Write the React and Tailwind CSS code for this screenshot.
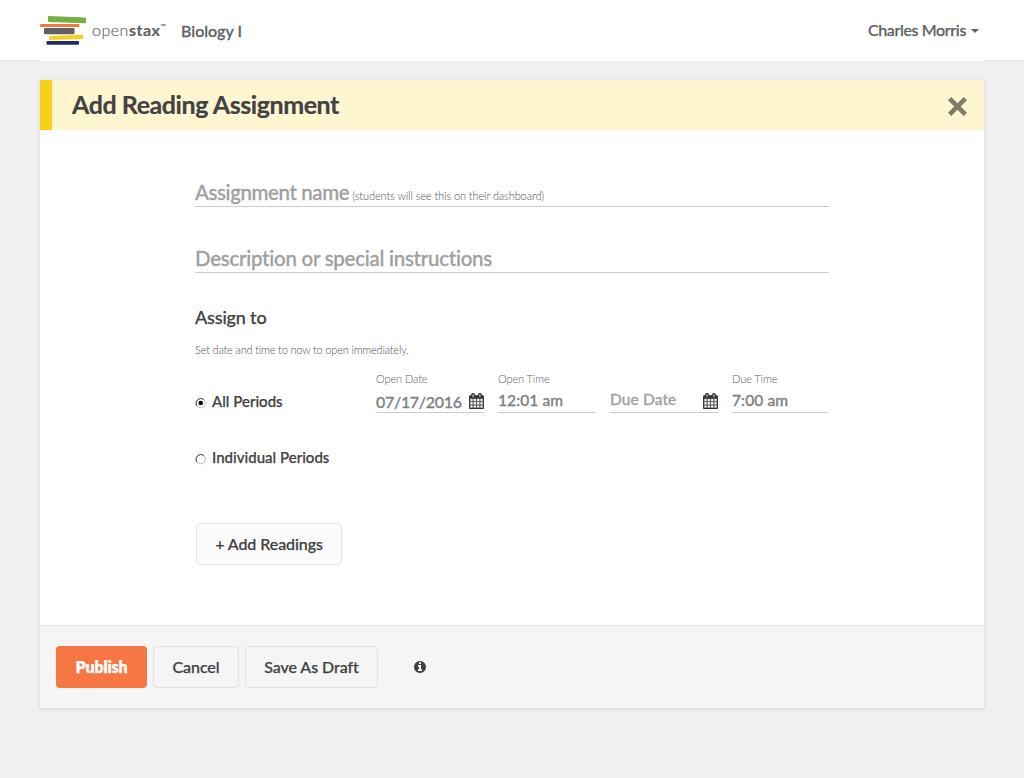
import React from "react";

const CALENDAR =
  "M192 1664h288v-288h-288v288zm352 0h320v-288h-320v288zm-352-352h288v-320h-288v320zm352 0h320v-320h-320v320zm-352-384h288v-288h-288v288zm736 736h320v-288h-320v288zm-384-736h320v-288h-320v288zm768 736h288v-288h-288v288zm-384-352h320v-320h-320v320zm-352-864v-288q0-13-9.5-22.5t-22.5-9.5h-64q-13 0-22.5 9.5t-9.5 22.5v288q0 13 9.5 22.5t22.5 9.5h64q13 0 22.5-9.5t9.5-22.5zm736 864h288v-320h-288v320zm-384-384h320v-288h-320v288zm384 0h288v-288h-288v288zm32-480v-288q0-13-9.5-22.5t-22.5-9.5h-64q-13 0-22.5 9.5t-9.5 22.5v288q0 13 9.5 22.5t22.5 9.5h64q13 0 22.5-9.5t9.5-22.5zm384-64v1280q0 52-38 90t-90 38h-1408q-52 0-90-38t-38-90v-1280q0-52 38-90t90-38h128v-96q0-66 47-113t113-47h64q66 0 113 47t47 113v96h384v-96q0-66 47-113t113-47h64q66 0 113 47t47 113v96h128q52 0 90 38t38 90z";
const INFO =
  "M1152 1376v-160q0-14-9-23t-23-9h-96v-512q0-14-9-23t-23-9h-320q-14 0-23 9t-9 23v160q0 14 9 23t23 9h96v320h-96q-14 0-23 9t-9 23v160q0 14 9 23t23 9h448q14 0 23-9t9-23zm-128-896v-160q0-14-9-23t-23-9h-192q-14 0-23 9t-9 23v160q0 14 9 23t23 9h192q14 0 23-9t9-23zm640 416q0 209-103 385.5t-279.5 279.5-385.5 103-385.5-103-279.5-279.5-103-385.5 103-385.5 279.5-279.5 385.5-103 385.5 103 279.5 279.5 103 385.5z";

function Logo() {
  return (
    <svg viewBox="0 0 46 30" className="h-[30px] w-[46px] shrink-0">
      <path d="M9 1 45 2.4Q46 2.5 46 3.5V7Q46 8.300 45 8.200L9 7Q8 7 8 6V2Q8 1 9 1Z" fill="#77af42" />
      <rect x="0" y="9" width="39.500" height="3" rx="1" fill="#f47641" />
      <rect x="4" y="13" width="30.500" height="6.300" rx="1.300" fill="#5e6062" />
      <path d="M10 21 42 19.800Q43 19.800 43 20.800V23Q43 24 42 24L10 25Q9 25 9 24V22Q9 21 10 21Z" fill="#f4d019" />
      <rect x="6.500" y="26" width="32.500" height="3.800" rx="1" fill="#232c66" />
    </svg>
  );
}

function Field({ label, value, icon, muted, className }) {
  return (
    <div className={`flex h-[42px] flex-col justify-between border-b border-[#cccccc] ${className}`}>
      <span className="h-4 whitespace-nowrap text-[11px] font-light leading-4 tracking-[-0.1px] text-[#606060]">{label}</span>
      <div className="flex h-[24px] items-start justify-between [-webkit-text-stroke:0.3px]">
        <span className={muted ? "text-[15.500px] font-medium leading-[22px] tracking-[0.12px] text-[#a0a0a0]" : icon ? "pt-[2px] text-[16px] font-medium leading-[23px] tracking-[-0.32px] text-[#818181]" : "text-[15.500px] font-medium leading-[24px] tracking-[0.12px] text-[#818181]"}>
          {value}
        </span>
        {icon && (
          <svg viewBox="64 0 1664 1792" className="mt-[5px] h-4 w-[15px] shrink-0" fill="#333333" stroke="#333333" strokeWidth="30">
            <path d={CALENDAR} />
          </svg>
        )}
      </div>
    </div>
  );
}

function Radio({ checked }) {
  return (
    <svg viewBox="0 0 12 12" className="h-3 w-3 shrink-0">
      <circle cx="5.500" cy="6" r="4.800" fill="#fff" stroke="#bdbdbd" />
      <path d="M1.900 9.300A5 5 0 0 1 9 2.500" fill="none" stroke="#555" />
      {checked && <circle cx="5.700" cy="6" r="2.300" fill="#000" />}
    </svg>
  );
}

export default function App() {
  return (
    <div className="h-[778px] w-[1024px] overflow-hidden bg-[#f0f0f0] font-['Lato',sans-serif] text-[#424242]">
      <header className="flex h-[61px]">
        <div className="w-10 border-b border-[#e5e5e5] bg-white" />
        <div className="flex w-[944px] items-start justify-between bg-white text-[#5f6163]">
          <div className="flex">
            <div className="mt-[15px]"><Logo /></div>
            <div className="ml-[6px] mt-[20px] flex w-[89px] text-[16px] font-light leading-[20px] tracking-[0.5px] [-webkit-text-stroke:0.15px]">
              open<span className="font-bold">stax</span>
              <span className="mt-[-1px] text-[7px] font-normal leading-[15px] tracking-normal">™</span>
            </div>
            <span className="mt-[19px] text-[16px] font-medium leading-[23px] [-webkit-text-stroke:0.3px]">Biology I</span>
          </div>
          <div className="mr-[5px] mt-[18px] flex items-center gap-[5px]">
            <span className="text-[16px] font-medium leading-[23px] tracking-[-0.36px] [-webkit-text-stroke:0.25px]">Charles Morris</span>
            <svg viewBox="0 0 8 4" className="mt-[3px] h-1 w-2" fill="#5f6163"><path d="M0 0h8L4 4z" /></svg>
          </div>
        </div>
        <div className="w-10 border-b border-[#e5e5e5] bg-white" />
      </header>

      <main className="ml-10 mt-[19px] flex h-[628px] w-[944px] flex-col bg-white shadow-[0_1px_4px_rgba(0,0,0,0.12)]">
        <div className="flex h-[50px] items-start justify-between border-l-[12px] border-[#f4d019] bg-[#fef5d1] pl-5 pr-[17px]">
          <h1 className="text-[25px] font-bold leading-[48px] tracking-[-0.43px] [-webkit-text-stroke:0.2px]">Add Reading Assignment</h1>
          <svg viewBox="0 0 19 19" className="mt-[17px] h-[19px] w-[19px]" fill="none" stroke="#7f7b68" strokeWidth="4.600" strokeLinecap="square"><path d="M3.200 3.200 15.800 15.800M15.800 3.200 3.200 15.800" /></svg>
        </div>

        <div className="h-[495px] pl-[155px]">
          <div className="mt-[50px] flex h-[27px] w-[634px] items-baseline whitespace-nowrap border-b border-[#cccccc]">
            <span className="text-[20.500px] font-medium leading-[25px] tracking-[-0.4px] text-[#a0a0a0] [-webkit-text-stroke:0.3px]">Assignment name</span>
            <span className="ml-[3px] text-[11px] font-light tracking-[-0.09px] text-[#505050]">(students will see this on their dashboard)</span>
          </div>
          <div className="mt-[39px] h-[27px] w-[634px] border-b border-[#cccccc]">
            <span className="block text-[20.500px] font-medium leading-[25px] tracking-[-0.26px] text-[#a0a0a0] [-webkit-text-stroke:0.3px]">Description or special instructions</span>
          </div>
          <h2 className="mt-[30px] text-[18px] font-medium leading-[28px] tracking-[-0.17px] [-webkit-text-stroke:0.25px]">Assign to</h2>
          <p className="mt-[11px] text-[11px] font-light leading-[16px] tracking-[-0.18px] text-[#505050]">Set date and time to now to open immediately.</p>
          <div className="mt-[13px] flex h-[42px] w-[634px]">
            <div className="flex w-[181px] items-start gap-[5px] pt-[20px] text-[15px] font-medium leading-[20px] tracking-[0.02px] [-webkit-text-stroke:0.25px]">
              <div className="pt-[6px]"><Radio checked /></div>All Periods
            </div>
            <Field label="Open Date" value="07/17/2016" icon className="w-[108px]" />
            <Field label="Open Time" value="12:01 am" className="ml-[14px] w-[97px]" />
            <Field label="" value="Due Date" icon muted className="ml-[15px] w-[108px]" />
            <Field label="Due Time" value="7:00 am" className="ml-[14px] w-[97px]" />
          </div>
          <div className="mt-[34px] flex h-[22px] items-start gap-[5px] text-[15px] font-medium leading-[20px] tracking-[0.02px] [-webkit-text-stroke:0.25px]">
            <div className="pt-[6px]"><Radio /></div>Individual Periods
          </div>
          <button className="ml-px mt-[54px] block h-[42px] w-[146px] rounded-[4px] border border-[#e5e5e5] bg-[#fbfbfb] text-[16px] font-medium tracking-[-0.07px] [-webkit-text-stroke:0.25px]">+ Add Readings</button>
        </div>

        <footer className="flex h-[83px] items-start border-t border-[#e5e5e5] bg-[#f5f5f5] pl-4 pt-5 text-[16px] font-medium tracking-[-0.06px] [-webkit-text-stroke:0.25px]">
          <button className="h-[42px] w-[91px] rounded-[4px] bg-[#f67743] font-extrabold tracking-[-0.15px] text-white">Publish</button>
          <button className="ml-[6px] h-[42px] w-[86px] rounded-[4px] border border-[#e1e1e1]">Cancel</button>
          <button className="ml-[6px] h-[42px] w-[133px] rounded-[4px] border border-[#e1e1e1]">Save As Draft</button>
          <svg viewBox="128 128 1536 1536" className="ml-[36px] mt-[15px] h-3 w-3" fill="#424242"><path d={INFO} /></svg>
        </footer>
      </main>
    </div>
  );
}
